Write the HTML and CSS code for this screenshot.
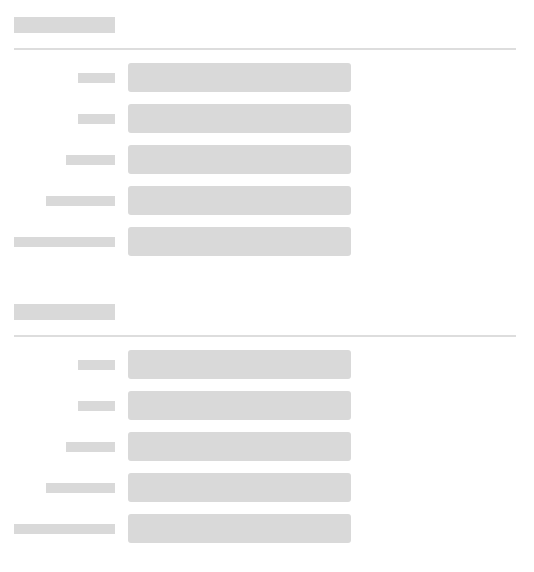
FILE: index.html
```html
<!DOCTYPE html>
<html lang="en">
<head>
  <meta charset="UTF-8">
  <title>Form loading</title>
  <link rel="stylesheet" href="styles.css">
</head>
<body>
  <div class="page">
    <section class="section">
      <div class="title"></div>
      <div class="rule"></div>
      <div class="fields">
        <div class="label w-sm"></div><div class="field"></div>
        <div class="label w-sm"></div><div class="field"></div>
        <div class="label w-md"></div><div class="field"></div>
        <div class="label w-lg"></div><div class="field"></div>
        <div class="label w-xl"></div><div class="field"></div>
      </div>
    </section>

    <section class="section">
      <div class="title"></div>
      <div class="rule"></div>
      <div class="fields">
        <div class="label w-sm"></div><div class="field"></div>
        <div class="label w-sm"></div><div class="field"></div>
        <div class="label w-md"></div><div class="field"></div>
        <div class="label w-lg"></div><div class="field"></div>
        <div class="label w-xl"></div><div class="field"></div>
      </div>
    </section>
  </div>
</body>
</html>
```

FILE: styles.css
```css
* {
  box-sizing: border-box;
}

body {
  margin: 0;
  background: #ffffff;
  font-family: 'Liberation Sans', Arial, sans-serif;
}

.page {
  width: 502px;
  margin-left: 14px;
  padding-top: 17px;
}

.section {
  margin-bottom: 48px;
}

.title {
  width: 101px;
  height: 16px;
  background: #d9d9d9;
}

.rule {
  height: 2px;
  margin: 15px 0 13px;
  background: #dddddd;
}

.fields {
  display: grid;
  grid-template-columns: 101px 223px;
  column-gap: 13px;
  row-gap: 12px;
  align-items: center;
}

.label {
  justify-self: end;
  height: 10px;
  background: #d9d9d9;
}

.w-sm { width: 37px; }
.w-md { width: 49px; }
.w-lg { width: 69px; }
.w-xl { width: 101px; }

.field {
  height: 29px;
  border-radius: 3px;
  background: #d9d9d9;
}
```
